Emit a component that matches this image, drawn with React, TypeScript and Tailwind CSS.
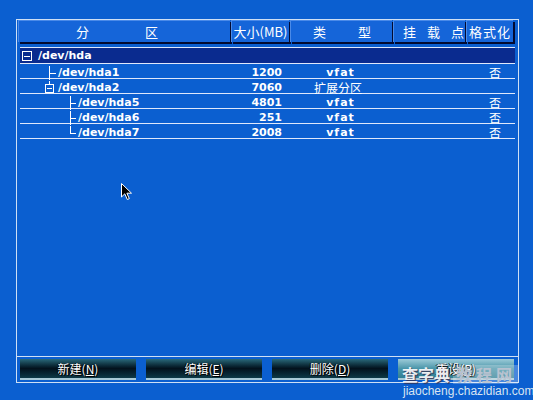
import React from 'react';

type Row = {
  name: string;
  level: number;
  size: string;
  type: string;
  fmt: string;
  tree: 'root' | 'mid' | 'box' | 'leafMid' | 'leafEnd';
  selected?: boolean;
};

const rows: Row[] = [
  { name: '/dev/hda', level: 0, size: '', type: '', fmt: '', tree: 'root', selected: true },
  { name: '/dev/hda1', level: 1, size: '1200', type: 'vfat', fmt: '否', tree: 'mid' },
  { name: '/dev/hda2', level: 1, size: '7060', type: '扩展分区', fmt: '', tree: 'box' },
  { name: '/dev/hda5', level: 2, size: '4801', type: 'vfat', fmt: '否', tree: 'leafMid' },
  { name: '/dev/hda6', level: 2, size: '251', type: 'vfat', fmt: '否', tree: 'leafMid' },
  { name: '/dev/hda7', level: 2, size: '2008', type: 'vfat', fmt: '否', tree: 'leafEnd' },
];

const cjk = "font-['Noto_Sans_CJK_SC',sans-serif]";

// little tree connectors in front of each name
const Tree = ({ kind }: { kind: Row['tree'] }) => {
  const w = kind === 'root' ? 18 : kind === 'mid' || kind === 'box' ? 38 : 58;
  return (
    <svg width={w} height={14} className="shrink-0" shapeRendering="crispEdges">
      {kind === 'root' && (
        <g stroke="#fff" fill="none">
          <rect x={2.5} y={2.5} width={9} height={9} />
          <line x1={4} y1={7} x2={10} y2={7} />
        </g>
      )}
      {kind === 'mid' && (
        <g stroke="#fff">
          <line x1={29.5} y1={0} x2={29.5} y2={14} />
          <line x1={29} y1={7.5} x2={36} y2={7.5} />
        </g>
      )}
      {kind === 'box' && (
        <g stroke="#fff" fill="none">
          <line x1={29.5} y1={0} x2={29.5} y2={3} />
          <rect x={25.5} y={3.5} width={8} height={8} />
          <line x1={27} y1={7.5} x2={32} y2={7.5} />
        </g>
      )}
      {kind === 'leafMid' && (
        <g stroke="#fff">
          <line x1={50.5} y1={0} x2={50.5} y2={14} />
          <line x1={50} y1={7.5} x2={56} y2={7.5} />
        </g>
      )}
      {kind === 'leafEnd' && (
        <g stroke="#fff">
          <line x1={50.5} y1={0} x2={50.5} y2={8} />
          <line x1={50} y1={7.5} x2={56} y2={7.5} />
        </g>
      )}
    </svg>
  );
};

const HeadCell = ({ w, children, className = '' }: { w: string; children: React.ReactNode; className?: string }) => (
  <div
    className={`${w} h-[22px] flex items-center bg-[#1565d9] border-l border-t border-[#4a8ae8] shadow-[2px_2px_0_#020a30] text-white text-[13px] ${cjk} ${className}`}
  >
    {children}
  </div>
);

const Btn = ({ label, key2, focus }: { label: string; key2: string; focus?: boolean }) => (
  <div
    className={`w-[116px] h-[21px] flex items-center justify-center border-b-2 border-[#a9cad6] text-white text-[12px] ${cjk} [text-shadow:1px_1px_0_#000,-1px_0_0_#000] ${
      focus
        ? 'bg-gradient-to-b from-[#9ccbd8] via-[#4a96aa] to-[#2f7f94]'
        : 'bg-gradient-to-b from-[#2a6a7c] via-[#03121d] to-[#0e3a48]'
    }`}
  >
    {label}(<span className="underline">{key2}</span>)
  </div>
);

export default function App() {
  return (
    <div className="w-[533px] h-[400px] bg-[#0b5fd0] relative overflow-hidden font-['DejaVu_Sans',sans-serif]">
      <div className="pt-[19px] pl-[16px]">
        <div className="w-[503px] h-[364px] border border-[#cfe0f5] flex flex-col">
          {/* header */}
          <div className="flex gap-[1px] pl-[1px]">
            <HeadCell w="w-[212px]" className="pl-[57px] gap-[56px]">
              <span>分</span>
              <span>区</span>
            </HeadCell>
            <HeadCell w="w-[58px]" className="justify-center text-[12px]">
              大小(MB)
            </HeadCell>
            <HeadCell w="w-[102px]" className="pl-[22px] gap-[32px]">
              <span>类</span>
              <span>型</span>
            </HeadCell>
            <HeadCell w="w-[72px]" className="pl-[9px] gap-[11px]">
              <span>挂</span>
              <span>载</span>
              <span>点</span>
            </HeadCell>
            <HeadCell w="w-[47px]" className="pl-[2px] tracking-[1px]">
              格式化
            </HeadCell>
          </div>

          {/* rows */}
          <div className="mt-[5px] ml-[3px] w-[495px] border-t border-[#dfe8fb] flex-1">
            {rows.map((r) => (
              <div
                key={r.name}
                className={`${r.selected ? 'h-[16px] bg-[#0a2b8f]' : 'h-[15px]'} grid grid-cols-[211px_58px_103px_73px_50px] items-center border-b border-[#dfe8fb] text-white text-[11px] font-bold`}
              >
                <div className="flex items-center">
                  <Tree kind={r.tree} />
                  <span>{r.name}</span>
                </div>
                <div className="text-right pr-[7px]">{r.size}</div>
                <div className={`text-center ${r.type === 'vfat' ? 'tracking-[1px]' : `${cjk} font-normal text-[12px] pr-[5px]`}`}>
                  {r.type}
                </div>
                <div />
                <div className={`text-right pr-[14px] font-normal text-[12px] ${cjk}`}>{r.fmt}</div>
              </div>
            ))}
          </div>

          {/* buttons */}
          <div className="border-t border-[#cfe0f5] pt-[2px] pb-[2px] pl-[3px] flex gap-[10px]">
            <Btn label="新建" key2="N" />
            <Btn label="编辑" key2="E" />
            <Btn label="删除" key2="D" />
            <Btn label="重设" key2="R" focus />
          </div>
        </div>
      </div>

      {/* mouse pointer */}
      <svg className="absolute left-[121px] top-[183px]" width="12" height="18" viewBox="0 0 12 18">
        <path d="M0.5 0.5 L0.5 14 L3.8 10.8 L6.3 16.5 L8.3 15.6 L5.9 10.2 L10.5 10.2 Z" fill="#000" stroke="#fff" strokeWidth="1" />
      </svg>

      {/* watermark */}
      <div className="absolute left-[402px] top-[365px] flex flex-col items-start pointer-events-none whitespace-nowrap">
        <div className={`flex items-center gap-[3px] text-[16px] font-bold leading-[19px] ${cjk}`}>
          <span className="text-white/90 [text-shadow:1px_1px_1px_#335]">查字典</span>
          <span className="text-[#b8c2d0] bg-white/25 pl-[3px] pr-[2px] tracking-[4px]">教程网</span>
        </div>
        <div className="text-[12px] text-[#d8e4f2] leading-[15px] font-['Liberation_Sans',sans-serif] pl-[1px]">
          jiaocheng.chazidian.com
        </div>
      </div>
    </div>
  );
}
